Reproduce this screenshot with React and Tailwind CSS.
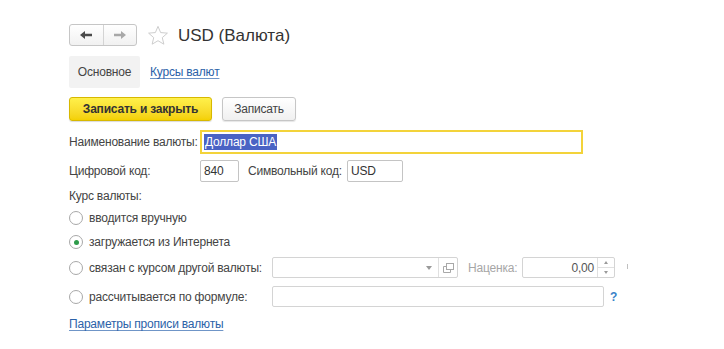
import React from "react";

function Radio({ checked }) {
  return (
    <span className="w-[14px] h-[14px] rounded-full border border-[#a8a8a8] bg-white flex items-center justify-center shrink-0">
      {checked && <span className="w-[5px] h-[5px] rounded-full bg-[#2e9b4a]" />}
    </span>
  );
}

export default function App() {
  return (
    <div
      className="w-[724px] h-[349px] bg-white text-[#444] text-[12px] tracking-[-0.2px] leading-none overflow-hidden whitespace-nowrap"
      style={{ fontFamily: '"Liberation Sans", Arial, sans-serif' }}
    >
      <div className="pl-[69px] pt-[24px] flex flex-col">
        {/* header */}
        <div className="flex items-center h-[22px]">
          <div className="flex h-[22px] w-[68px] border border-[#c6c6c6] rounded-[3px] bg-gradient-to-b from-white to-[#f1f1f1]">
            <div className="flex-1 flex items-center justify-center border-r border-[#d4d4d4]">
              <svg width="14" height="10" viewBox="0 0 14 10">
                <path d="M1 5 L6 1 L6 3.8 L13 3.8 L13 6.2 L6 6.2 L6 9 Z" fill="#4a4a4a" />
              </svg>
            </div>
            <div className="flex-1 flex items-center justify-center">
              <svg width="14" height="10" viewBox="0 0 14 10">
                <path d="M13 5 L8 1 L8 3.8 L1 3.8 L1 6.2 L8 6.2 L8 9 Z" fill="#a8a8a8" />
              </svg>
            </div>
          </div>
          <svg className="ml-[10px]" width="22" height="21" viewBox="0 0 24 23">
            <path
              d="M12 1.5 L14.9 8.3 L22.3 8.9 L16.7 13.8 L18.4 21 L12 17.2 L5.6 21 L7.3 13.8 L1.7 8.9 L9.1 8.3 Z"
              fill="none"
              stroke="#c8c8c8"
              strokeWidth="1"
              strokeLinejoin="round"
            />
          </svg>
          <span className="ml-[9px] text-[17px] tracking-normal text-[#333]">USD (Валюта)</span>
        </div>

        {/* tabs */}
        <div className="flex items-center mt-[10px] h-[32px]">
          <div className="h-full w-[71px] bg-[#f2f2f2] rounded-[2px] flex items-center justify-center text-[#444]">Основное</div>
          <a className="ml-[10px] text-[#2b62a8] underline underline-offset-2 decoration-[#6f95c7]">Курсы валют</a>
        </div>

        {/* buttons */}
        <div className="flex items-center mt-[9px] gap-[10px]">
          <div className="h-[24px] w-[143px] flex items-center justify-center rounded-[3px] border border-[#d7b800] bg-gradient-to-b from-[#fff04a] to-[#f4d000] font-bold text-[#333] shadow-[0_1px_1px_rgba(0,0,0,0.15)]">
            Записать и закрыть
          </div>
          <div className="h-[24px] w-[74px] flex items-center justify-center rounded-[3px] border border-[#c6c6c6] bg-gradient-to-b from-white to-[#f0f0f0] text-[#444] shadow-[0_1px_1px_rgba(0,0,0,0.1)]">
            Записать
          </div>
        </div>

        {/* name */}
        <div className="flex items-center mt-[9px] h-[24px]">
          <span className="w-[131px]">Наименование валюты:</span>
          <div className="w-[383px] h-[24px] border-2 border-[#f3d33a] flex items-center pl-[2px]">
            <span className="bg-[#4a63c4] text-white px-[1px] py-[2px]">Доллар США</span>
          </div>
        </div>

        {/* codes */}
        <div className="flex items-center mt-[6px] h-[22px]">
          <span className="w-[131px]">Цифровой код:</span>
          <div className="w-[39px] h-[22px] border border-[#c4c4c4] rounded-[2px] flex items-center pl-[3px] text-[#333]">840</div>
          <span className="ml-[9px] w-[99px]">Символьный код:</span>
          <div className="w-[56px] h-[22px] border border-[#c4c4c4] rounded-[2px] flex items-center pl-[3px] text-[#333]">USD</div>
        </div>

        {/* kurs */}
        <div className="mt-[6px] h-[16px] flex items-center">Курс валюты:</div>

        <div className="mt-[6px] h-[16px] flex items-center">
          <Radio />
          <span className="ml-[6px]">вводится вручную</span>
        </div>

        <div className="mt-[8px] h-[16px] flex items-center">
          <Radio checked />
          <span className="ml-[6px]">загружается из Интернета</span>
        </div>

        <div className="mt-[7px] h-[21px] flex items-center">
          <Radio />
          <span className="ml-[6px] w-[183px]">связан с курсом другой валюты:</span>
          <div className="w-[186px] h-[21px] border border-[#d4d4d4] rounded-[2px] flex items-center justify-end">
            <div className="w-[18px] h-full flex items-center justify-center">
              <svg width="6" height="4" viewBox="0 0 6 4"><path d="M0 0 L6 0 L3 4 Z" fill="#9a9a9a" /></svg>
            </div>
            <div className="w-[19px] h-full border-l border-[#e0e0e0] flex items-center justify-center">
              <svg width="11" height="10" viewBox="0 0 11 10">
                <rect x="3.5" y="0.5" width="7" height="6" fill="none" stroke="#a8a8a8" />
                <path d="M3.5 3.5 H0.5 V9.5 H7.5 V6.5" fill="none" stroke="#a8a8a8" />
              </svg>
            </div>
          </div>
          <span className="ml-[10px] w-[54px] text-[#a6a6a6]">Наценка:</span>
          <div className="w-[93px] h-[21px] border border-[#d4d4d4] rounded-[2px] flex items-center">
            <span className="flex-1 text-right pr-[3px] text-[#555]">0,00</span>
            <div className="w-[17px] h-full border-l border-[#e0e0e0] flex flex-col">
              <div className="flex-1 border-b border-[#e0e0e0] flex items-center justify-center">
                <svg width="4" height="3" viewBox="0 0 4 3"><path d="M0 3 L4 3 L2 0 Z" fill="#9a9a9a" /></svg>
              </div>
              <div className="flex-1 flex items-center justify-center">
                <svg width="4" height="3" viewBox="0 0 4 3"><path d="M0 0 L4 0 L2 3 Z" fill="#9a9a9a" /></svg>
              </div>
            </div>
          </div>
          <span className="ml-[12px] w-[1px] h-[5px] bg-[#c0c0c0] self-start mt-[7px]" />
        </div>

        <div className="mt-[8px] h-[21px] flex items-center">
          <Radio />
          <span className="ml-[6px] w-[183px]">рассчитывается по формуле:</span>
          <div className="w-[332px] h-[21px] border border-[#d4d4d4] rounded-[2px]" />
          <span className="ml-[6px] font-bold text-[#3a82c8]">?</span>
        </div>

        <div className="mt-[9px] h-[16px] flex items-center">
          <a className="text-[#2b62a8] underline underline-offset-2 decoration-[#6f95c7]">Параметры прописи валюты</a>
        </div>
      </div>
    </div>
  );
}
